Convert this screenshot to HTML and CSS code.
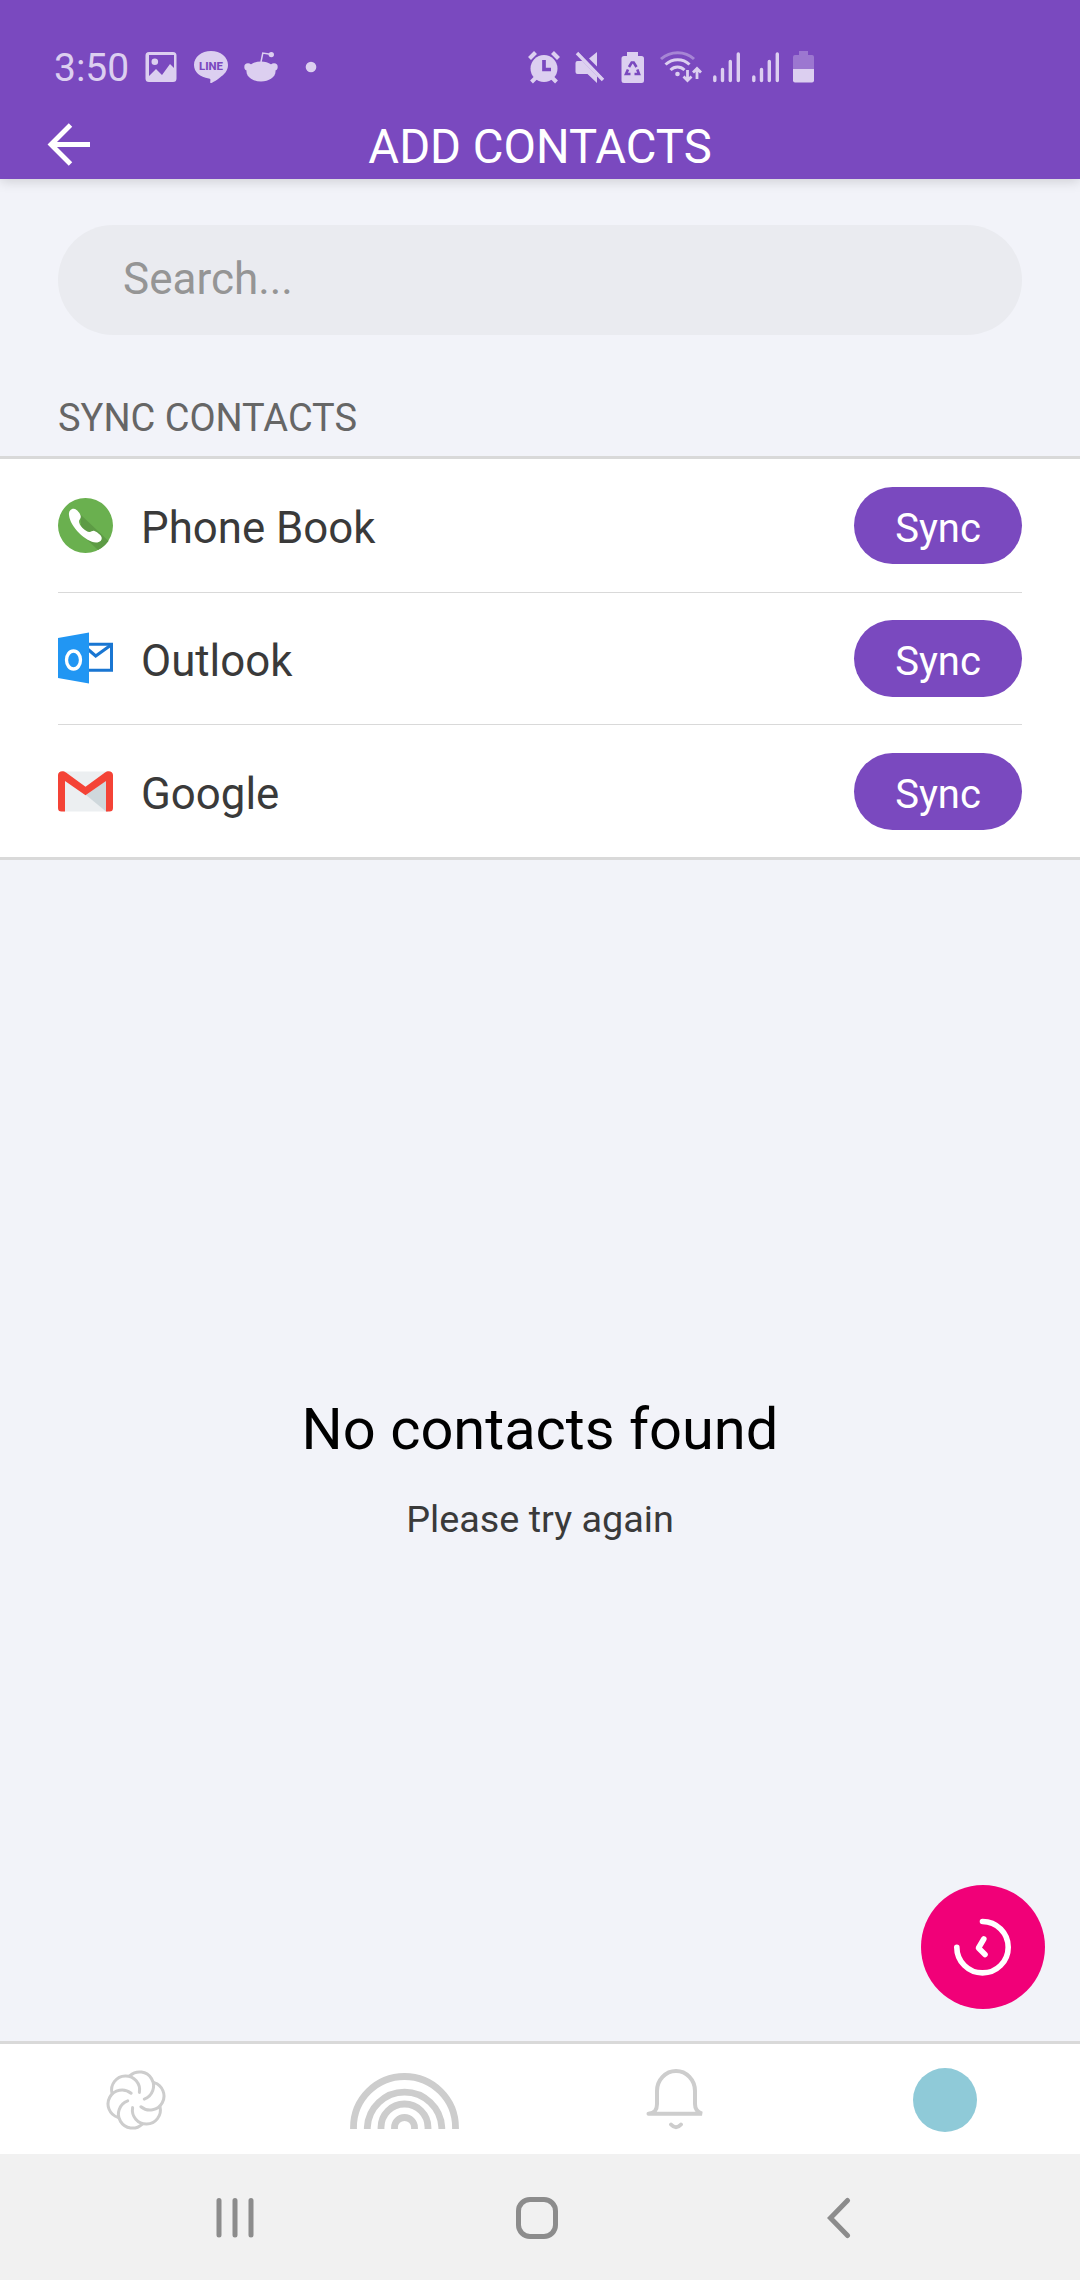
FILE: index.html
```html
<!DOCTYPE html>
<html lang="en">
<head>
<meta charset="utf-8">
<title>Add Contacts</title>
<link rel="stylesheet" href="styles.css">
</head>
<body>
<div class="screen">
  <header class="header">
    <div class="status">
      <span class="clock">3:50</span>
      <svg class="notif" width="184" height="44" viewBox="138 44 184 44" fill="#dccff0">
        <path fill-rule="evenodd" d="M149 52h24a3.500 3.500 0 0 1 3.500 3.500v23a3.500 3.500 0 0 1-3.500 3.500h-24a3.500 3.500 0 0 1-3.500-3.500v-23a3.500 3.500 0 0 1 3.500-3.500zM149 55v21l7-7 6 6 8-11 4 4v-13zM154.800 58.500a3.300 3.300 0 1 1 0 6.600a3.300 3.300 0 0 1 0-6.600z"/>
        <path d="M211 51c9.500 0 17 6 17 14 0 6-4 9.500-8 12.500-3 2.300-6 4.300-8 5.300-1.700.8-2-.2-1.700-1.600.3-1.700.2-2.400-1.500-2.700C200 77.300 194 72 194 65c0-8 7.500-14 17-14z"/>
        <text x="211" y="69.500" text-anchor="middle" font-size="11.500" font-weight="800" textLength="24" lengthAdjust="spacingAndGlyphs" fill="#7a49bf">LINE</text>
        <ellipse cx="261" cy="71.500" rx="14.500" ry="10"/>
        <circle cx="248" cy="67" r="3.700"/><circle cx="274" cy="67" r="3.700"/>
        <path d="M261 62l1.800-9 9 1.600" fill="none" stroke="#dccff0" stroke-width="1.500"/>
        <circle cx="271.300" cy="54.600" r="2.700"/>
        <circle cx="311" cy="67" r="5.300"/>
      </svg>
      <svg class="system" width="300" height="44" viewBox="520 44 300 44" fill="#dccff0">
        <circle cx="544" cy="68.500" r="13.500"/>
        <path d="M529.500 58.500l6-6M558.500 58.500l-6-6" stroke="#dccff0" stroke-width="4.200"/>
        <path d="M531.500 82l5-5M556.500 82l-5-5" stroke="#dccff0" stroke-width="4"/>
        <path d="M544 60v9.500h7" fill="none" stroke="#7a49bf" stroke-width="3.700"/>
        <path d="M577.500 61h5L597 76v7l-9.500-9h-10a2 2 0 0 1-2-2v-9a2 2 0 0 1 2-2zM589 58.500l8-6.500v14.500z"/>
        <path d="M577 53l26 27" stroke="#dccff0" stroke-width="3.500"/>
        <path d="M579.500 51.500l26 27" stroke="#7a49bf" stroke-width="1.500"/>
        <path d="M627 52h11v4h3.500a2.500 2.500 0 0 1 2.500 2.500v22a2.500 2.500 0 0 1-2.500 2.500h-17.500a2.500 2.500 0 0 1-2.500-2.500v-22a2.500 2.500 0 0 1 2.500-2.500h3z"/>
        <path d="M629 67l2.700-4.500h2l2.800 4.500M637.300 69.500l1.700 4.500h-4.500M628 69.500l-2 4.500h4.500" fill="none" stroke="#7a49bf" stroke-width="2.600"/>
        <g fill="none" stroke="#dccff0" stroke-width="3">
          <path opacity=".45" d="M661 59c9.500-8.500 24-8.500 33 0"/>
          <path d="M665.500 64.500c7-6.500 17.500-6.500 24 0M670.500 70c4-4 10-4 14 0"/>
          <path stroke-width="2.800" d="M687.500 70v10M683.500 76.500l4 4 4-4M697 79v-10M693 72.500l4-4 4 4"/>
        </g>
        <circle cx="677.500" cy="74" r="2.300"/>
        <g stroke="#dccff0" stroke-width="3.400" stroke-linecap="round">
          <path d="M714.800 77v3.500M722.500 69.500v11M730.300 61.500v19M738.300 54v26.500M753.800 77v3.500M761.500 69.500v11M769.300 61.500v19M777.300 54v26.500"/>
        </g>
        <path d="M799 51h9v4h4a2 2 0 0 1 2 2v12h-21v-12a2 2 0 0 1 2-2h4z" opacity=".35"/>
        <path d="M793 69h21v11.500a2 2 0 0 1-2 2h-17a2 2 0 0 1-2-2z"/>
      </svg>
    </div>
    <div class="bar">
      <svg class="back" width="44" height="44" viewBox="46 122 44 44" fill="none" stroke="#fff" stroke-width="4.900"><path d="M70.500 125L51 144.500 70.500 164M51 144.500h39"/></svg>
      <h1 class="title">ADD CONTACTS</h1>
    </div>
  </header>
  <main class="main">
    <div class="search"><span class="search-text">Search...</span></div>
    <h2 class="section">SYNC CONTACTS</h2>
    <ul class="list">
      <li class="row">
        <svg class="icon" width="55" height="55" viewBox="0 0 55 55">
          <circle cx="27.500" cy="27.500" r="27.500" fill="#6ab04f"/>
          <path d="M22 16L50.500 43Q46 49 40 52L24 37z" fill="#5d9b45"/>
          <path d="M16 10.700C13 10.500 10.500 13 11 17c1 12 17 27 27 27.500 4 0 6.500-2.500 5.500-5.500-.5-2-4.500-5-7-6-2-.7-3 1-5 1-4 0-11-7-10.500-11 .2-1.500 2-2.500 1.800-4.500-.3-3-4-7.500-6.800-7.800z" fill="#fff"/>
        </svg>
        <span class="name">Phone Book</span><button class="sync">Sync</button>
      </li>
      <li class="row">
        <svg class="icon" width="55" height="55" viewBox="0 0 55 55">
          <path d="M29 13.300h24.500v26H29" fill="#fff" stroke="#1976d2" stroke-width="3"/>
          <path d="M29 17.500l8.700 7.500L53 14" fill="none" stroke="#1976d2" stroke-width="3.200"/>
          <path d="M0 7L31 1.500v51L0 47z" fill="#2196f3"/>
          <ellipse cx="15.500" cy="29" rx="7" ry="9" fill="none" stroke="#fff" stroke-width="3.300"/>
        </svg>
        <span class="name">Outlook</span><button class="sync">Sync</button>
      </li>
      <li class="row">
        <svg class="icon" width="55" height="55" viewBox="0 0 55 55">
          <path d="M5 7.500h45v40H5z" fill="#eceff1"/>
          <path d="M28 31L50 15v32.500h-2z" fill="#cfd8dc"/>
          <path d="M7 17v30.500H3.500A3.500 3.500 0 0 1 0 44V11C0 7 5 6 8 8.500l19.500 14.300L47 8.500C50 6 55 7 55 11v33a3.500 3.500 0 0 1-3.500 3.500H48V17L27.500 31.200z" fill="#f44336"/>
        </svg>
        <span class="name">Google</span><button class="sync">Sync</button>
      </li>
    </ul>
    <div class="empty">
      <p class="empty-title">No contacts found</p>
      <p class="empty-hint">Please try again</p>
    </div>
    <button class="fab" aria-label="Recent">
      <svg width="124" height="124" viewBox="0 0 124 124" fill="none" stroke="#fff" stroke-width="5.600" stroke-linecap="round" stroke-linejoin="round"><path d="M61.500 36.500a25.700 25.700 0 1 1-25.700 25.700M62.800 54L57.500 63l6.500 6.500"/></svg>
    </button>
  </main>
  <nav class="tabs">
    <svg width="60" height="60" viewBox="-30 -30 60 60" fill="none" stroke="#cdcdcd" stroke-width="3" stroke-linecap="round">
      <path id="petal" d="M8.300 -.9A14 14 0 1 0 -6 -24.300"/>
      <use href="#petal" transform="rotate(60)"/>
      <use href="#petal" transform="rotate(120)"/>
      <use href="#petal" transform="rotate(180)"/>
      <use href="#petal" transform="rotate(240)"/>
      <use href="#petal" transform="rotate(300)"/>
    </svg>
    <svg class="rainbow" width="109" height="56" viewBox="0 0 109 56" fill="none" stroke="#cdcdcd" stroke-width="6.800"><path d="M3.500 56V54.500a51 51 0 0 1 102 0V56M17.300 56V54.500a37.300 37.300 0 0 1 74.500 0V56M31 56V54.500a23.500 23.500 0 0 1 47 0V56M44.500 56V54.500a10 10 0 0 1 20 0V56"/></svg>
    <svg width="60" height="62" viewBox="646 2068 60 62" fill="none" stroke="#cdcdcd" stroke-width="4" stroke-linecap="round"><path d="M648.500 2112.700H702C697 2111 695 2108 695 2103V2090a19 20 0 0 0-38 0v13c0 6-2 9-8.500 9.700M671 2123.500q5 5.500 10 0"/></svg>
    <span class="avatar"></span>
  </nav>
  <footer class="sysnav">
    <svg width="38" height="44" viewBox="0 0 38 44" stroke="#8c8c8c" stroke-width="5" stroke-linecap="round"><path d="M3 4.500v34.500M19 4.500v34.500M35 4.500v34.500"/></svg>
    <svg width="42" height="42" viewBox="0 0 42 42" fill="none" stroke="#8c8c8c" stroke-width="5"><rect x="2.500" y="2.500" width="37" height="37" rx="11.500"/></svg>
    <svg width="24" height="42" viewBox="0 0 24 42" fill="none" stroke="#8c8c8c" stroke-width="5" stroke-linecap="round"><path d="M20.500 3.500L3.500 21l17 17.500"/></svg>
  </footer>
</div>
</body>
</html>
```
FILE: styles.css
```css
* { box-sizing: border-box; margin: 0; padding: 0; }
body { font-family: Roboto, "Liberation Sans", sans-serif; background: #f2f3f9; }
svg { display: block; flex: none; }
button { border: 0; font: inherit; }
.screen { display: flex; flex-direction: column; width: 1080px; height: 2280px; }
.header { display: flex; flex-direction: column; height: 179px; background: #7a49bf; box-shadow: 0 2px 12px rgba(0, 0, 0, .16); color: #fff; }
.status { display: flex; align-items: center; height: 88px; padding: 44px 0 0 54px; color: #dccff0; }
.clock { width: 84px; padding-top: 4px; font-size: 39px; line-height: 44px; white-space: nowrap; }
.system { margin-left: 198px; }
.bar { display: grid; grid-template-columns: 44px 1fr 44px; align-items: start; height: 91px; padding: 31px 46px 0; }
.back { margin-top: 3px; }
.title { font-size: 47.2px; font-weight: 400; line-height: 56px; text-align: center; white-space: nowrap; }
.main { display: flex; flex-direction: column; flex: 1; min-height: 0; padding-top: 46px; }
.search { display: flex; align-items: center; height: 110px; margin: 0 58px; padding: 0 65px 2px; border-radius: 55px; background: #eaebf0; }
.search-text { font-size: 44px; color: #959595; }
.section { margin: 60px 58px 0; height: 61px; font-size: 38px; font-weight: 400; line-height: 46px; color: #666; }
.list { list-style: none; height: 404px; padding: 0 58px; background: #fff; border-top: 3px solid #d9d9d9; border-bottom: 3px solid #d9d9d9; }
.row { display: flex; align-items: center; height: 133px; }
.row + .row { height: 132px; border-top: 1px solid #d9d9d9; }
.row:last-child { height: 134px; }
.name { flex: 1; margin-left: 28px; padding-top: 5px; font-size: 43.8px; color: #3a3a3a; }
.sync { width: 168px; height: 77px; padding-top: 6px; border-radius: 38.5px; background: #7a49bf; color: #fff; font-size: 40px; }
.empty { margin-top: 530px; text-align: center; }
.empty-title { font-size: 57.8px; line-height: 78px; color: #000; }
.empty-hint { margin-top: 26px; font-size: 37.8px; line-height: 50px; color: #3a3a3a; }
.fab { align-self: flex-end; width: 124px; height: 124px; margin: auto 35px 32px 0; border-radius: 50%; background: #f10078; }
.tabs { display: grid; grid-template-columns: repeat(4, 270px); align-items: center; justify-items: center; height: 113px; padding: 2px 0 0 1px; border-top: 3px solid #d9d9d9; background: #fff; }
.rainbow { margin: 1px 4px 0 0; }
.avatar { width: 64px; height: 64px; margin-right: 2px; border-radius: 50%; background: #8fcad8; }
.sysnav { display: grid; grid-template-columns: 300px 311px 24px; align-items: center; height: 126px; padding: 2px 0 0 216px; background: #f1f1f1; }
```
